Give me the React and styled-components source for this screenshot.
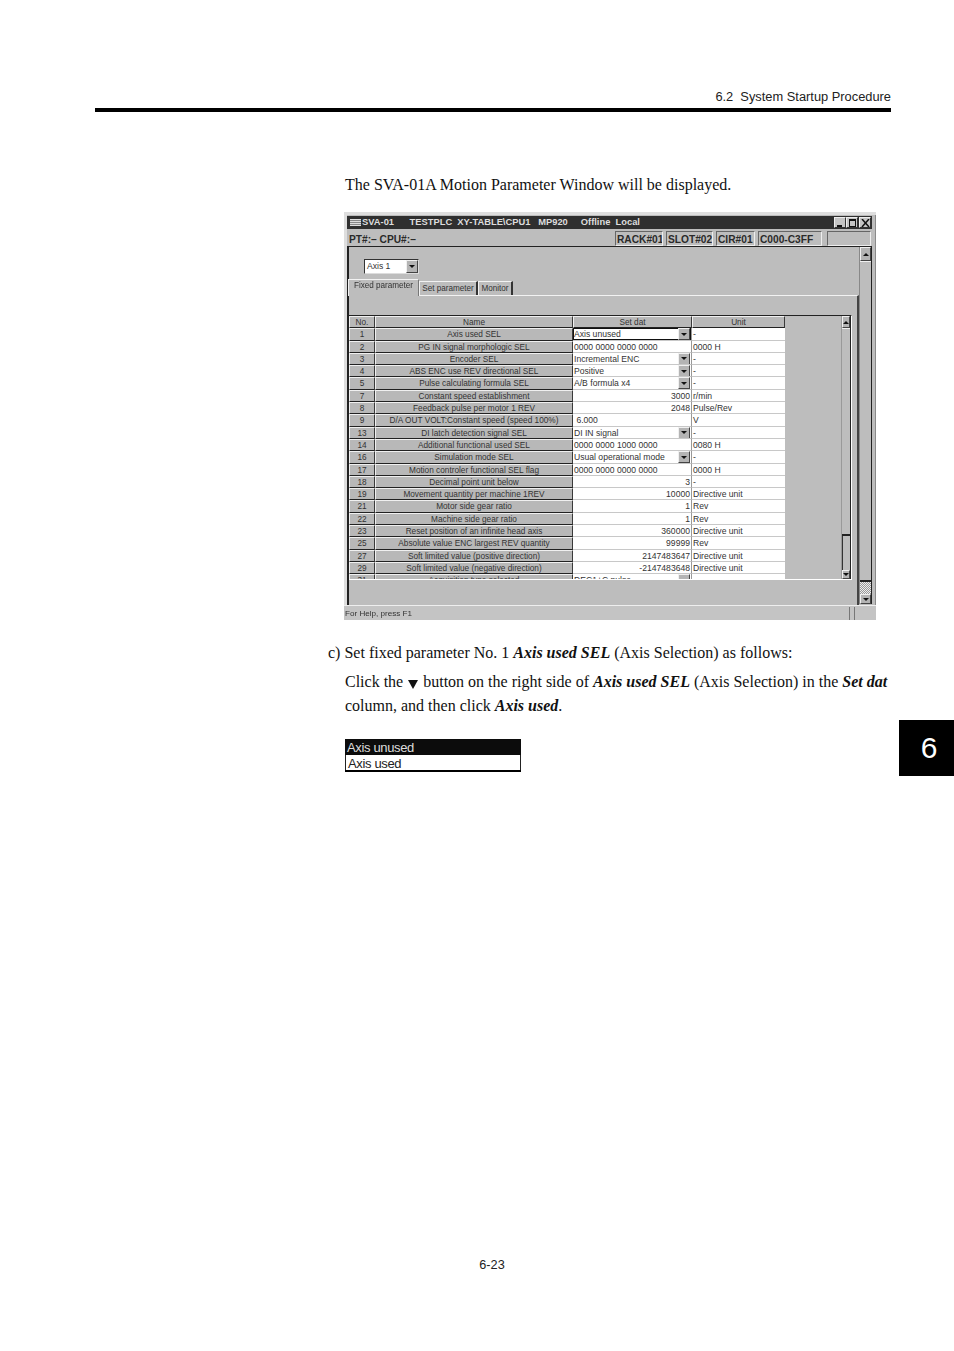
import React from "react";
import styled, { createGlobalStyle } from "styled-components";

const Global = createGlobalStyle`
  html, body { margin: 0; padding: 0; background: #fff; }
  * { box-sizing: border-box; }
`;

const Page = styled.div`
  position: relative;
  width: 954px;
  height: 1351px;
  overflow: hidden;
  padding-top: 90px;
  font-family: "Liberation Serif", serif;
  color: #111;
`;

const RunningHead = styled.header`
  margin: 0 63px 0 95px;
  height: 22px;
  border-bottom: 4px solid #000;
  text-align: right;
  font: 12.85px/14px "Liberation Sans", sans-serif;
  color: #222;
`;

const Content = styled.main`
  margin: 61px 0 0 344px;
  width: 546px;
`;

const Para = styled.p`
  margin: ${(p) => p.$top ?? 0}px 0 0 ${(p) => p.$indent ?? 1}px;
  font-size: 16px;
  line-height: 24px;
  white-space: nowrap;
`;

const Em = styled.b`
  font-style: italic;
  font-weight: bold;
`;

const DownMark = styled.svg`
  display: inline-block;
  width: 10px;
  height: 10px;
  margin: 0 5px 0 5px;
  vertical-align: -2px;
`;

const Win = styled.section`
  width: 532px;
  height: 408px;
  margin: 15px 0 21px;
  padding: 4px 4px 0 3px;
  display: flex;
  flex-direction: column;
  background: #bdbdbd;
  box-shadow: inset 3px 3px 0 #dedede, inset -1px 0 0 #8a8a8a;
  font: 8.6px/12px "Liberation Sans", sans-serif;
  color: #333;
  filter: blur(0.3px);
`;

const TitleBar = styled.div`
  height: 13px;
  flex: none;
  display: flex;
  align-items: center;
  background: #2f2f2f;
  color: #ddd;
  font-weight: bold;
  font-size: 9.35px;
  line-height: 11px;
  padding: 0 1px 0 3px;
  white-space: pre;
`;

const SysMenu = styled.span`
  width: 11px;
  height: 7px;
  margin-right: 1px;
  background: repeating-linear-gradient(#ddd 0 1px, #888 1px 2px);
`;

const TitleText = styled.span`
  flex: 1;
  height: 13px;
  padding-top: 1px;
`;

const WinBtn = styled.span`
  width: 12px;
  height: 11px;
  flex: none;
  margin-left: ${(p) => p.$gap ?? 0}px;
  background: #c4c4c4;
  border: 1px solid;
  border-color: #eee #333 #333 #eee;
  display: flex;
  align-items: center;
  justify-content: center;
`;

const BtnGlyph = styled.svg`
  width: 9px;
  height: 8px;
`;

const InfoBar = styled.div`
  height: 16px;
  margin-top: 2px;
  flex: none;
  display: flex;
  align-items: center;
  border-bottom: 1px solid #222;
  font-size: 10.2px;
  font-weight: bold;
  color: #2a2a2a;
`;

const InfoField = styled.span`
  height: 15px;
  width: ${(p) => p.$w}px;
  flex: none;
  margin-right: ${(p) => p.$mr ?? 3}px;
  padding-left: 1px;
  border: 1px solid;
  border-color: #666 #eee #eee #666;
  line-height: 15px;
  white-space: nowrap;
  overflow: hidden;
  ${(p) => p.$plain && "border-color: transparent;"}
`;

const Body = styled.div`
  flex: 1;
  min-height: 0;
  display: flex;
  border-left: 2px solid #222;
`;

const Main = styled.div`
  flex: 1;
  min-width: 0;
  padding-top: 12px;
`;

const Combo = styled.div`
  margin-left: 15px;
  width: 55px;
  height: 15px;
  display: flex;
  justify-content: space-between;
  background: #fff;
  border: 1px solid;
  border-color: #333 #ddd #ddd #333;
  padding-left: 2px;
  line-height: 13px;
`;

const ArrowBtn = styled.span`
  width: ${(p) => p.$w ?? 12}px;
  height: ${(p) => p.$h ?? 12}px;
  flex: none;
  display: flex;
  align-items: center;
  justify-content: center;
  background: #b4b4b4;
  border: 1px solid;
  border-color: #f0f0f0 #444 #444 #f0f0f0;
`;

const Tri = styled.i`
  width: 0;
  height: 0;
  border-left: 3px solid transparent;
  border-right: 3px solid transparent;
  ${(p) => (p.$up ? "border-bottom" : "border-top")}: 3px solid #111;
`;

const TabRow = styled.div`
  height: 18px;
  margin: 3px 0 0 -1px;
  display: flex;
  align-items: flex-end;
  font-size: 8.15px;
`;

const Tab = styled.div`
  height: ${(p) => (p.$active ? 17 : 14)}px;
  width: ${(p) => p.$w}px;
  padding-top: ${(p) => (p.$active ? 0 : 1)}px;
  margin-bottom: ${(p) => (p.$active ? -1 : 0)}px;
  text-align: center;
  white-space: nowrap;
  border-top: 1px solid #f2f2f2;
  border-left: 1px solid #f2f2f2;
  border-right: 2px solid #333;
  ${(p) => p.$active && "border-right: 1px solid #777; background: #bdbdbd; position: relative;"}
`;

const Pane = styled.div`
  height: 310px;
  padding-top: 19px;
  border-top: 1px solid #f2f2f2;
  border-right: 2px solid #444;
`;

const TableFrame = styled.div`
  height: 265px;
  width: 503px;
  display: flex;
  border-top: 1px solid #222;
  border-bottom: 1px solid #fff;
  border-right: 1px solid #fff;
`;

const TableClip = styled.div`
  width: 436px;
  height: 263px;
  overflow: hidden;
  flex: none;
`;

const Grid = styled.div`
  display: grid;
  grid-template-columns: 26px 198px 119px 93px;
  grid-auto-rows: 12.3px;
`;

const HeadCell = styled.div`
  background: #b8b8b8;
  border: 1px solid;
  border-color: #f0f0f0 #3a3a3a #222 #f0f0f0;
  text-align: center;
  font-size: 8.25px;
  line-height: 12px;
  overflow: hidden;
  white-space: nowrap;
`;

const ValueCell = styled.div`
  background: #fff;
  border-bottom: 1px solid #c8c8c8;
  border-right: 1px solid #999;
  padding: 0 1px 0 1px;
  display: flex;
  justify-content: ${(p) => (p.$right ? "flex-end" : "space-between")};
  line-height: 12px;
  white-space: nowrap;
  overflow: hidden;
  ${(p) => p.$focus && "box-shadow: inset 0 0 0 1px #111;"}
`;

const UnitCell = styled(ValueCell)`
  border-right: none;
`;

const Filler = styled.div`
  flex: 1;
`;

const Scroll = styled.div`
  width: ${(p) => p.$w}px;
  flex: none;
  display: flex;
  flex-direction: column;
  height: ${(p) => p.$h}px;
  border-left: 1px solid ${(p) => p.$edge ?? "#222"};
  border-right: 1px solid #222;
  background: #bdbdbd;
`;

const Thumb = styled.div`
  flex: 1;
  border-top: 1px solid #f0f0f0;
  border-bottom: 2px solid #222;
`;

const Checker = styled.div`
  height: ${(p) => p.$h}px;
  flex: none;
  background: repeating-conic-gradient(#999 0 25%, #eee 0 50%) 0 0 / 2px 2px;
`;

const LowerTrack = styled.div`
  height: ${(p) => p.$h}px;
  flex: none;
  border-left: 1px solid #333;
`;

const StatusBar = styled.div`
  height: 15px;
  flex: none;
  display: flex;
  align-items: center;
  border-top: 1px solid #eee;
  margin: 0 -4px 0 -3px;
  padding-left: 1px;
  background: #c4c4c4;
  font-size: 8.1px;
  line-height: 14px;
`;

const StatusText = styled.span`
  flex: 1;
  padding-top: 2px;
`;

const StatusCell = styled.span`
  width: ${(p) => p.$w}px;
  height: 13px;
  border-left: 1px solid #777;
`;

const DropList = styled.div`
  width: 176px;
  margin: 21px 0 0 1px;
  border-bottom: 2px solid #000;
  font: 13px/18px "Liberation Sans", sans-serif;
  letter-spacing: -0.35px;
`;

const DropItem = styled.div`
  height: ${(p) => (p.$selected ? 16 : 15)}px;
  padding-left: 2px;
  white-space: nowrap;
  background: ${(p) => (p.$selected ? "#0c0c0c" : "#fff")};
  color: ${(p) => (p.$selected ? "#ddd" : "#222")};
  ${(p) => !p.$selected && "border: solid #222; border-width: 0 1px; line-height: 17px;"}
`;

const ChapterTab = styled.aside`
  position: absolute;
  left: 899px;
  top: 720px;
  width: 55px;
  height: 56px;
  padding-left: 5px;
  background: #000;
  color: #fff;
  font: 30px/56px "Liberation Sans", sans-serif;
  text-align: center;
`;

const PageNumber = styled.footer`
  position: absolute;
  left: 0;
  top: 1258px;
  width: 984px;
  text-align: center;
  font: 12.7px/14px "Liberation Sans", sans-serif;
  color: #222;
`;

const rows = [
  ["1", "Axis used SEL", "Axis unused", "combo", "-", true],
  ["2", "PG IN signal morphologic SEL", "0000 0000 0000 0000", "", "0000 H"],
  ["3", "Encoder SEL", "Incremental ENC", "combo", "-"],
  ["4", "ABS ENC use REV directional SEL", "Positive", "combo", "-"],
  ["5", "Pulse calculating formula SEL", "A/B formula x4", "combo", "-"],
  ["7", "Constant speed establishment", "3000", "right", "r/min"],
  ["8", "Feedback pulse per motor 1 REV", "2048", "right", "Pulse/Rev"],
  ["9", "D/A OUT VOLT:Constant speed (speed 100%)", "\u00a06.000", "", "V"],
  ["13", "DI latch detection signal SEL", "DI IN signal", "combo", "-"],
  ["14", "Additional functional used SEL", "0000 0000 1000 0000", "", "0080 H"],
  ["16", "Simulation mode SEL", "Usual operational mode", "combo", "-"],
  ["17", "Motion controler functional SEL flag", "0000 0000 0000 0000", "", "0000 H"],
  ["18", "Decimal point unit below", "3", "right", "-"],
  ["19", "Movement quantity per machine 1REV", "10000", "right", "Directive unit"],
  ["21", "Motor side gear ratio", "1", "right", "Rev"],
  ["22", "Machine side gear ratio", "1", "right", "Rev"],
  ["23", "Reset position of an infinite head axis", "360000", "right", "Directive unit"],
  ["25", "Absolute value ENC largest REV quantity", "99999", "right", "Rev"],
  ["27", "Soft limited value (positive direction)", "2147483647", "right", "Directive unit"],
  ["29", "Soft limited value (negative direction)", "-2147483648", "right", "Directive unit"],
  ["31", "Acquisition type selected", "DEC1+C pulse", "combo", "-"],
];

const ArrowDown = () => (
  <ArrowBtn>
    <Tri />
  </ArrowBtn>
);

export default function App() {
  return (
    <Page>
      <Global />
      <RunningHead>6.2&nbsp; System Startup Procedure</RunningHead>
      <Content>
        <Para>The SVA-01A Motion Parameter Window will be displayed.</Para>
        <Win>
          <TitleBar>
            <SysMenu />
            <TitleText>SVA-01      TESTPLC  XY-TABLE\CPU1   MP920     Offline  Local</TitleText>
            <WinBtn>
              <BtnGlyph viewBox="0 0 9 8">
                <path d="M1 6h5v2H1z" fill="#111" />
              </BtnGlyph>
            </WinBtn>
            <WinBtn>
              <BtnGlyph viewBox="0 0 9 8">
                <path d="M1 0h7v8H1zM2 2v5h5V2z" fill="#111" fillRule="evenodd" />
              </BtnGlyph>
            </WinBtn>
            <WinBtn $gap={1}>
              <BtnGlyph viewBox="0 0 9 8">
                <path d="M1 0l7 8M8 0L1 8" stroke="#111" strokeWidth="1.5" fill="none" />
              </BtnGlyph>
            </WinBtn>
          </TitleBar>
          <InfoBar>
            <InfoField $w={268} $mr={0} $plain>PT#:– CPU#:–</InfoField>
            <InfoField $w={48}>RACK#01</InfoField>
            <InfoField $w={47}>SLOT#02</InfoField>
            <InfoField $w={39}>CIR#01</InfoField>
            <InfoField $w={64} $mr={5}>C000-C3FF</InfoField>
            <InfoField $w={44} $mr={0} />
          </InfoBar>
          <Body>
            <Main>
              <Combo>
                Axis 1
                <ArrowBtn $h={13}>
                  <Tri />
                </ArrowBtn>
              </Combo>
              <TabRow>
                <Tab $w={71} $active>Fixed parameter</Tab>
                <Tab $w={59}>Set parameter</Tab>
                <Tab $w={35}>Monitor</Tab>
              </TabRow>
              <Pane>
                <TableFrame>
                  <TableClip>
                    <Grid>
                      <HeadCell>No.</HeadCell>
                      <HeadCell>Name</HeadCell>
                      <HeadCell>Set dat</HeadCell>
                      <HeadCell>Unit</HeadCell>
                      {rows.map(([no, name, value, kind, unit, focus]) => (
                        <React.Fragment key={no}>
                          <HeadCell>{no}</HeadCell>
                          <HeadCell>{name}</HeadCell>
                          <ValueCell $right={kind === "right"} $focus={focus}>
                            <span>{value}</span>
                            {kind === "combo" && <ArrowDown />}
                          </ValueCell>
                          <UnitCell>{unit}</UnitCell>
                        </React.Fragment>
                      ))}
                    </Grid>
                  </TableClip>
                  <Filler />
                  <Scroll $w={10} $h={263} $edge="#999">
                    <ArrowBtn $w={8} $h={12}>
                      <Tri $up />
                    </ArrowBtn>
                    <Thumb />
                    <LowerTrack $h={34} />
                    <ArrowBtn $w={8} $h={9}>
                      <Tri />
                    </ArrowBtn>
                  </Scroll>
                </TableFrame>
              </Pane>
            </Main>
            <Scroll $w={13} $h={357} $edge="#888">
              <ArrowBtn $w={11} $h={14}>
                <Tri $up />
              </ArrowBtn>
              <Thumb />
              <Checker $h={12} />
              <ArrowBtn $w={11} $h={10}>
                <Tri />
              </ArrowBtn>
            </Scroll>
          </Body>
          <StatusBar>
            <StatusText>For Help, press F1</StatusText>
            <StatusCell $w={5} />
            <StatusCell $w={22} />
          </StatusBar>
        </Win>
        <Para $indent={-16}>
          c) Set fixed parameter No. 1 <Em>Axis used SEL</Em> (Axis Selection) as follows:
        </Para>
        <Para $top={5}>
          Click the
          <DownMark viewBox="0 0 10 10">
            <path d="M0 1h10L5 10z" fill="#111" />
          </DownMark>
          button on the right side of <Em>Axis used SEL</Em> (Axis Selection) in the <Em>Set dat</Em>
        </Para>
        <Para>
          column, and then click <Em>Axis used</Em>.
        </Para>
        <DropList>
          <DropItem $selected>Axis unused</DropItem>
          <DropItem>Axis used</DropItem>
        </DropList>
      </Content>
      <ChapterTab>6</ChapterTab>
      <PageNumber>6-23</PageNumber>
    </Page>
  );
}
